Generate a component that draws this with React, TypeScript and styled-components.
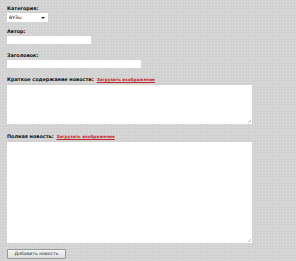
import React from "react";
import styled, { createGlobalStyle } from "styled-components";

const GlobalStyle = createGlobalStyle`
  html, body {
    margin: 0;
    padding: 0;
    background-color: #d2d2d2;
    background-image: radial-gradient(circle, #e2e2e2 0.6px, transparent 0.8px);
    background-size: 3px 3px;
  }
`;

const StyledForm = styled.form`
  display: flex;
  flex-direction: column;
  align-items: flex-start;
  padding: 5px 7px 0 7px;
  width: 296px;
  height: 261px;
  box-sizing: border-box;
  font-family: "DejaVu Sans", Verdana, sans-serif;
  color: #111;
`;

const StyledField = styled.div<{ $gap: number }>`
  display: flex;
  flex-direction: column;
  align-items: flex-start;
  margin-bottom: ${(p) => p.$gap}px;
`;

const StyledLabel = styled.label<{ $tall?: boolean }>`
  font-weight: bold;
  font-size: 4.9px;
  line-height: ${(p) => (p.$tall ? 7 : 6)}px;
  margin-bottom: 2px;
  display: flex;
  align-items: baseline;
  gap: 3px;
  white-space: nowrap;
`;

const StyledLink = styled.a`
  color: #c0282d;
  font-size: 4.2px;
  text-decoration: underline;
`;

const StyledSelect = styled.div`
  width: 41px;
  height: 9px;
  box-sizing: border-box;
  background: #fff;
  display: flex;
  align-items: center;
  justify-content: space-between;
  padding: 0 3px 0 2px;
  font-size: 4.6px;
  &::after {
    content: "";
    border-left: 2px solid transparent;
    border-right: 2px solid transparent;
    border-top: 2px solid #222;
  }
`;

const StyledInput = styled.div<{ $width: number }>`
  width: ${(p) => p.$width}px;
  height: 8px;
  background: #fff;
`;

const StyledTextarea = styled.div<{ $height: number }>`
  width: 245px;
  height: ${(p) => p.$height}px;
  background: #fff;
  position: relative;
  &::after {
    content: "";
    position: absolute;
    right: 1px;
    bottom: 1px;
    width: 3px;
    height: 3px;
    background: linear-gradient(135deg, transparent 45%, #bbb 50%, transparent 60%, transparent 75%, #bbb 80%, transparent 90%);
  }
`;

const StyledButton = styled.button`
  display: block;
  width: 59px;
  height: 10px;
  padding: 0;
  box-sizing: border-box;
  border: 1px solid #9a9a9a;
  border-radius: 1px;
  background: linear-gradient(#f4f4f4, #dedede);
  font-family: "DejaVu Sans", Verdana, sans-serif;
  font-size: 4.6px;
  line-height: 8px;
  color: #222;
`;

const App = () => {
  return (
    <>
      <GlobalStyle />
      <StyledForm>
        <StyledField $gap={6}>
          <StyledLabel>Категория:</StyledLabel>
          <StyledSelect>ВУЗы</StyledSelect>
        </StyledField>
        <StyledField $gap={8}>
          <StyledLabel>Автор:</StyledLabel>
          <StyledInput $width={84} />
        </StyledField>
        <StyledField $gap={8}>
          <StyledLabel>Заголовок:</StyledLabel>
          <StyledInput $width={134} />
        </StyledField>
        <StyledField $gap={9}>
          <StyledLabel $tall>
            Краткое содержание новости:
            <StyledLink href="#">Загрузить изображение</StyledLink>
          </StyledLabel>
          <StyledTextarea $height={39} />
        </StyledField>
        <StyledField $gap={6}>
          <StyledLabel $tall>
            Полная новость:
            <StyledLink href="#">Загрузить изображение</StyledLink>
          </StyledLabel>
          <StyledTextarea $height={101} />
        </StyledField>
        <StyledButton type="button">Добавить новость</StyledButton>
      </StyledForm>
    </>
  );
};

export default App;
